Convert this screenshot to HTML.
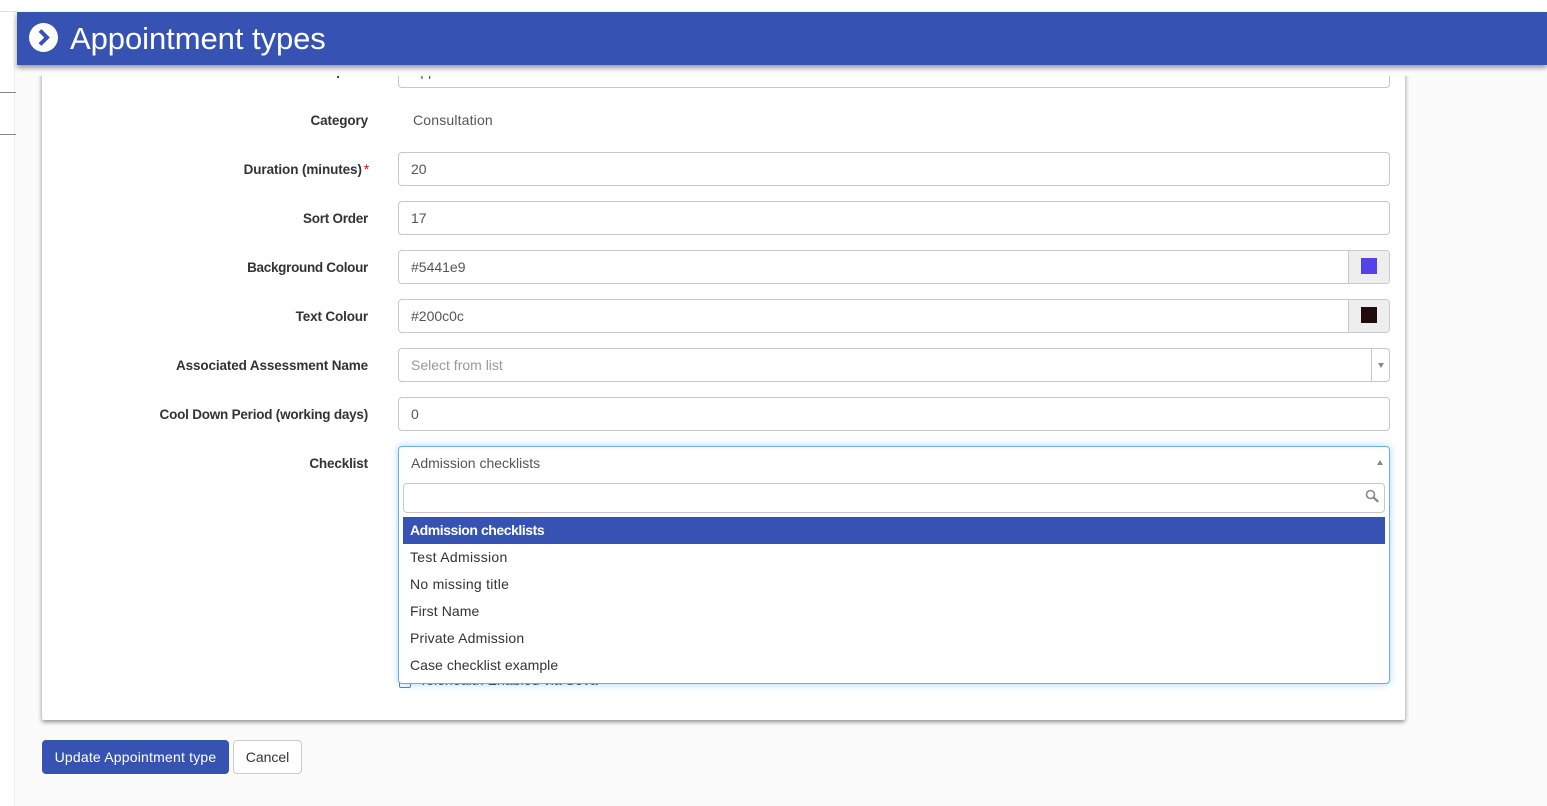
<!DOCTYPE html>
<html><head><meta charset="utf-8"><style>
*{box-sizing:border-box}
html,body{margin:0;padding:0;width:1547px;height:806px;overflow:hidden;background:#fff;font-family:"Liberation Sans",sans-serif;font-size:14px;color:#333}
.a{position:absolute}
#bg{left:14px;top:12px;width:1533px;height:794px;background:#fbfbfb;border-left:1px solid #eee}
#panel{left:42px;top:60px;width:1363px;height:660px;background:#fff;box-shadow:0 2px 5px rgba(0,0,0,.45);border-radius:2px}
#cover{left:17px;top:65px;width:1530px;height:11px;background:#fcfcfc;z-index:4}
#hdr{left:17px;top:12px;width:1530px;height:53px;background:#3653b4;box-shadow:0 3px 5px rgba(0,0,0,.4);z-index:5}
#title{left:70px;top:21px;font-size:31px;line-height:36px;color:#fff;z-index:6;white-space:nowrap;letter-spacing:-.06px}
.l{right:1179px;width:300px;text-align:right;font-weight:bold;font-size:13.5px;line-height:20px;color:#333;white-space:nowrap;letter-spacing:-.25px}
.i{left:398px;width:992px;height:34px;border:1px solid #c8c8c8;border-radius:4px;background:#fff;padding:0 12px;line-height:32px;color:#555;font-size:14px;white-space:nowrap}
.ad{right:0;top:0;width:41px;height:32px;background:#eee;border-left:1px solid #c8c8c8;border-radius:0 3px 3px 0}
.sw{position:absolute;left:12px;top:7px;width:16px;height:16px}
.o{left:403px;width:982px;height:27px;line-height:27px;padding-left:7px;font-size:14px;color:#333;z-index:4}
</style></head><body>
<div class="a" style="left:0;top:11px;width:17px;height:1px;background:#ddd"></div>
<div class="a" id="bg"></div>
<div class="a" style="left:0;top:92px;width:16px;height:1px;background:#888"></div>
<div class="a" style="left:0;top:134px;width:16px;height:1px;background:#888"></div>
<div class="a" id="panel"></div>
<div class="a l" style="top:61px">Description</div>
<div class="a i" style="top:54px">Appointment</div>
<div class="a" id="cover"></div>
<div class="a" id="hdr"></div>
<svg class="a" style="left:29px;top:23px;z-index:6" width="29" height="29" viewBox="0 0 29 29"><circle cx="14.5" cy="14.5" r="14.5" fill="#fff"/><path d="M11 7.5l7 7-7 7" fill="none" stroke="#3653b4" stroke-width="4"/></svg>
<div class="a" id="title">Appointment types</div>

<div class="a l" style="top:111px;letter-spacing:-.12px">Category</div>
<div class="a" style="left:413px;top:110px;line-height:20px;color:#555;font-size:14px;letter-spacing:.17px">Consultation</div>

<div class="a l" style="top:160px;right:1178px;letter-spacing:-.1px">Duration (minutes)<span style="color:#e00;font-weight:normal;margin-left:2px">*</span></div>
<div class="a i" style="top:152px">20</div>
<div class="a l" style="top:209px">Sort Order</div>
<div class="a i" style="top:201px">17</div>
<div class="a l" style="top:258px;letter-spacing:-.3px">Background Colour</div>
<div class="a i" style="top:250px">#5441e9<div class="a ad"><div class="sw" style="background:#5441e9"></div></div></div>
<div class="a l" style="top:307px;letter-spacing:-.15px">Text Colour</div>
<div class="a i" style="top:299px">#200c0c<div class="a ad"><div class="sw" style="background:#200c0c"></div></div></div>
<div class="a l" style="top:356px;letter-spacing:-.13px">Associated Assessment Name</div>
<div class="a i" style="top:348px;color:#999">Select from list<div class="a" style="right:17px;top:0;width:1px;height:32px;background:#c8c8c8"></div><div class="a" style="right:5px;top:14px;width:0;height:0;border-left:3.5px solid transparent;border-right:3.5px solid transparent;border-top:5px solid #888"></div></div>
<div class="a l" style="top:405px;letter-spacing:-.22px">Cool Down Period (working days)</div>
<div class="a i" style="top:397px">0</div>
<div class="a l" style="top:454px;letter-spacing:-.15px">Checklist</div>

<div class="a" style="left:399px;top:675px;width:12px;height:13px;border:1px solid #777;border-radius:2px;background:#fff"></div>
<div class="a" style="left:419px;top:672px;font-size:14px;line-height:16px;color:#333;letter-spacing:.08px">Telehealth Enabled via Sova</div>

<div class="a" style="left:398px;top:446px;width:992px;height:238px;background:#fff;border:1px solid #6fb0d8;border-radius:4px;box-shadow:0 0 8px rgba(102,175,233,.55);z-index:3"></div>
<div class="a" style="left:411px;top:453px;font-size:14px;line-height:20px;color:#555;z-index:4">Admission checklists</div>
<div class="a" style="left:1376.5px;top:460px;width:0;height:0;border-left:3.5px solid transparent;border-right:3.5px solid transparent;border-bottom:5px solid #888;z-index:4"></div>
<div class="a" style="left:403px;top:483px;width:982px;height:30px;border:1px solid #c8c8c8;border-radius:4px;background:#fff;z-index:4"></div>
<svg class="a" style="left:1365px;top:489px;z-index:5" width="15" height="15" viewBox="0 0 15 15"><circle cx="5.5" cy="5.5" r="4" fill="none" stroke="#888" stroke-width="1.6"/><path d="M8.5 8.5l4.8 4.3" stroke="#888" stroke-width="2.2"/></svg>
<div class="a o" style="top:517px;background:#3653b4;color:#fff;font-weight:bold;letter-spacing:-.45px">Admission checklists</div>
<div class="a o" style="top:544px;letter-spacing:.3px">Test Admission</div>
<div class="a o" style="top:571px;letter-spacing:.27px">No missing title</div>
<div class="a o" style="top:598px;letter-spacing:.1px">First Name</div>
<div class="a o" style="top:625px;letter-spacing:.18px">Private Admission</div>
<div class="a o" style="top:652px;letter-spacing:.05px">Case checklist example</div>

<div class="a" style="left:42px;top:740px;width:187px;height:34px;background:#3653b4;border-radius:4px;color:#fff;text-align:center;line-height:34px;font-size:14px;letter-spacing:.2px">Update Appointment type</div>
<div class="a" style="left:233px;top:740px;width:69px;height:34px;background:#fff;border:1px solid #ccc;border-radius:4px;color:#333;text-align:center;line-height:32px;font-size:14px">Cancel</div>
</body></html>
